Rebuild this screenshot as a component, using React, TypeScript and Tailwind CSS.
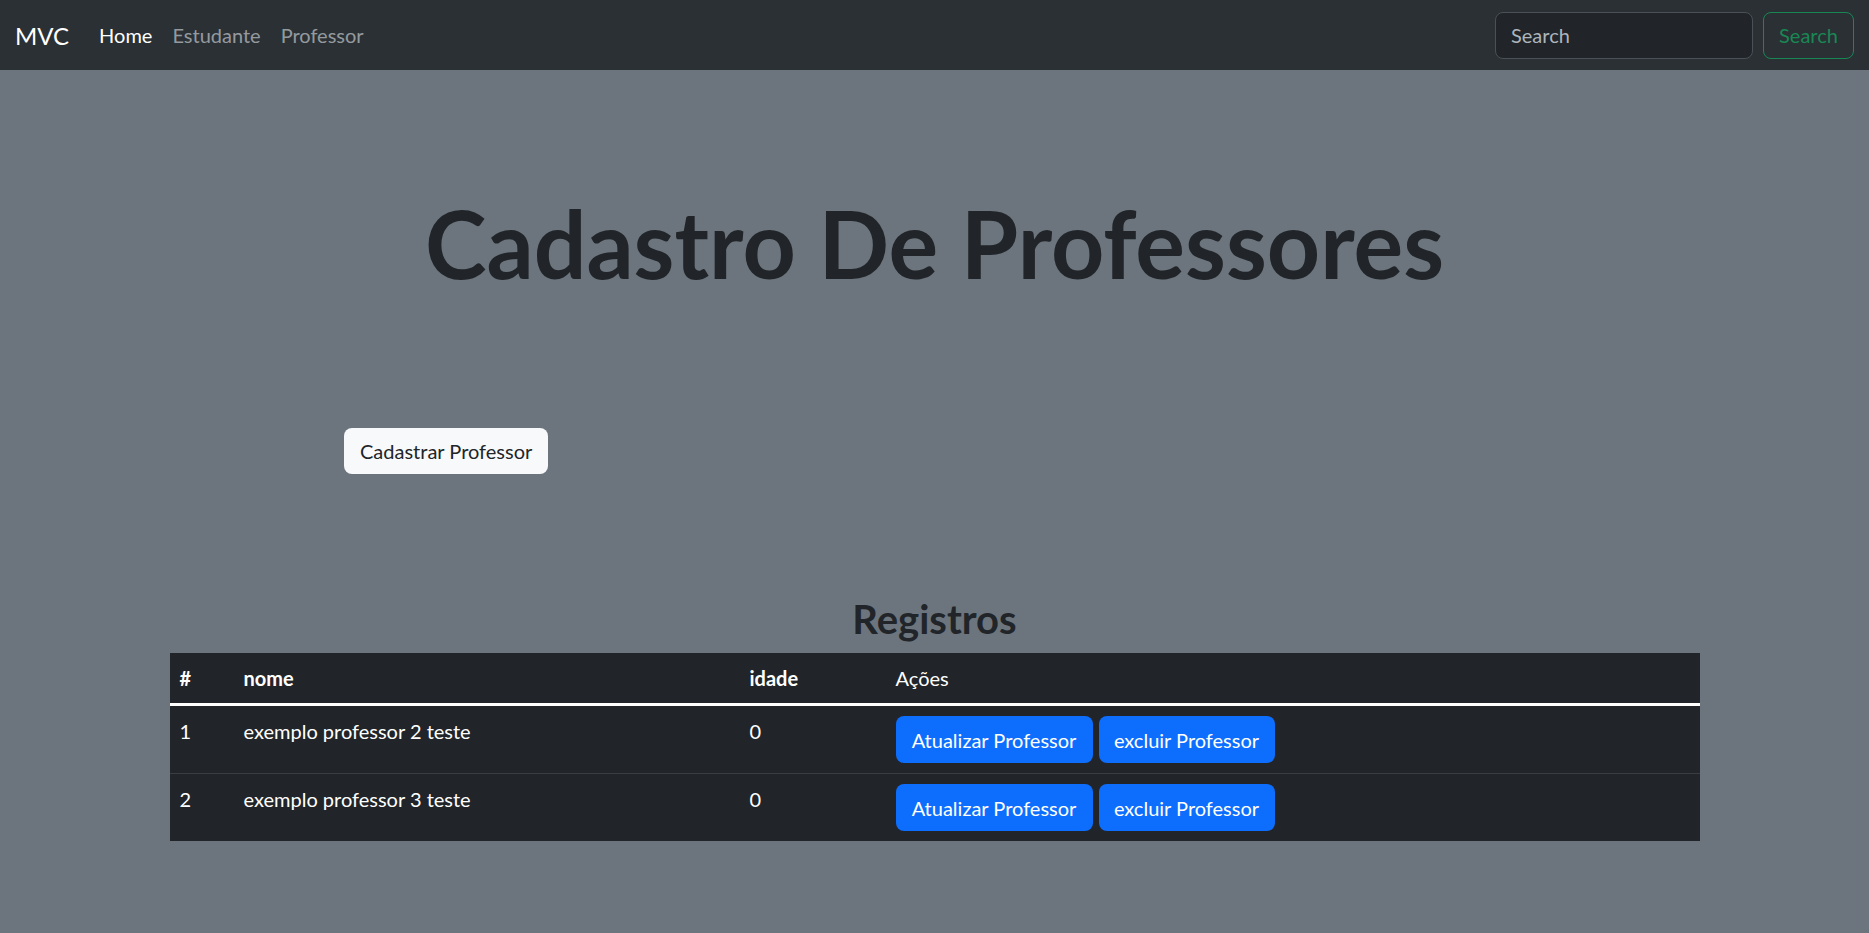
import React from 'react'

const rows = [
  { id: 1, nome: 'exemplo professor 2 teste', idade: 0 },
  { id: 2, nome: 'exemplo professor 3 teste', idade: 0 },
]

export default function App() {
  return (
    <div className="min-h-[933px] bg-[#6c757d] text-[20px] leading-[30px] text-[#212529] font-['Lato','Noto_Sans',sans-serif]">
      {/* Navbar */}
      <nav className="h-[70px] bg-[#2b3035] flex items-center px-[15px]">
        <span className="text-[24px] leading-[37px] text-white mr-[20px] pt-px">MVC</span>
        <a className="px-[10px] text-white">Home</a>
        <a className="px-[10px] text-[rgba(222,226,230,0.6)]">Estudante</a>
        <a className="px-[10px] text-[rgba(222,226,230,0.6)]">Professor</a>
        <div className="ml-auto flex items-center">
          <input
            placeholder="Search"
            className="w-[258px] h-[47px] rounded-[8px] border border-[#495057] bg-[#212529] px-[15px] text-[20px] text-[#dee2e6] placeholder:text-[#adb5bd] outline-none mr-[10px]"
          />
          <button className="w-[91px] h-[47px] rounded-[8px] border border-[#198754] text-[#198754] text-[20px]">
            Search
          </button>
        </div>
      </nav>

      {/* Hero heading */}
      <h1 className="pt-[118px] text-center text-[93px] leading-[110px] font-bold text-[#212529]">
        Cadastro De Professores
      </h1>

      {/* Create button */}
      <div className="pl-[344px] mt-[130px]">
        <button className="h-[46px] px-[16px] rounded-[8px] bg-[#f8f9fa] text-[#212529] text-[20px]">
          Cadastrar Professor
        </button>
      </div>

      {/* Records */}
      <h2 className="mt-[121px] text-center text-[40px] leading-[48px] font-bold text-[#212529]">Registros</h2>
      <table className="w-[1530px] mx-auto mt-[10px] bg-[#212529] text-white border-collapse">
        <thead>
          <tr className="border-b-[3px] border-white">
            <th className="text-left font-bold px-[10px] py-[10px] w-[64px]">#</th>
            <th className="text-left font-bold px-[10px] py-[10px] w-[506px]">nome</th>
            <th className="text-left font-bold px-[10px] py-[10px] w-[146px]">idade</th>
            <th className="text-left font-normal px-[10px] py-[10px]">Ações</th>
          </tr>
        </thead>
        <tbody>
          {rows.map((r, i) => (
            <tr key={r.id} className={i === 0 ? 'border-b border-[#3a3e42]' : ''}>
              <td className="align-top px-[10px] py-[10px]">{r.id}</td>
              <td className="align-top px-[10px] py-[10px]">{r.nome}</td>
              <td className="align-top px-[10px] py-[10px]">{r.idade}</td>
              <td className="align-top px-[10px] py-[10px]">
                <div className="flex gap-[6px]">
                  <button className="h-[47px] w-[197px] rounded-[8px] bg-[#0d6efd] text-white text-[20px]">
                    Atualizar Professor
                  </button>
                  <button className="h-[47px] w-[176px] rounded-[8px] bg-[#0d6efd] text-white text-[20px]">
                    excluir Professor
                  </button>
                </div>
              </td>
            </tr>
          ))}
        </tbody>
      </table>
    </div>
  )
}
